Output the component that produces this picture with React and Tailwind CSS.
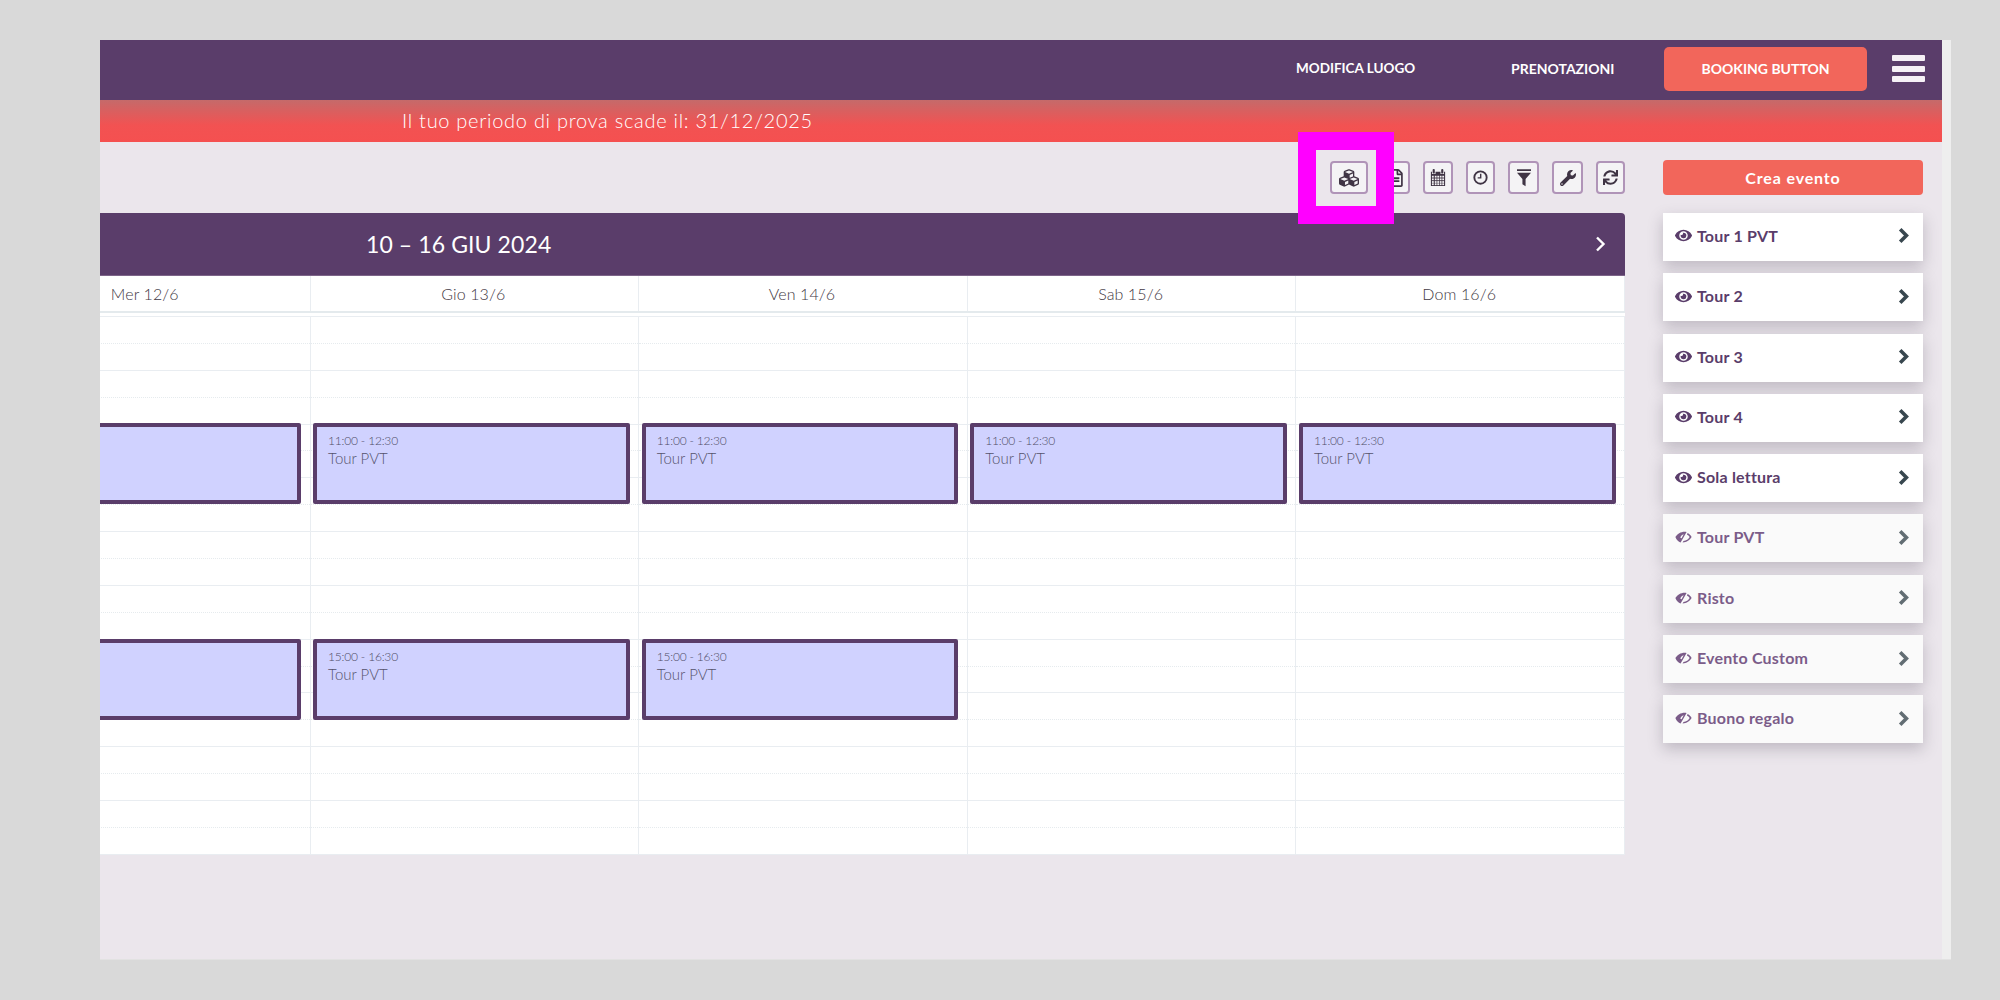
import React from "react";
import { FaCubes, FaRegFileAlt, FaWrench, FaSync, FaEye } from "react-icons/fa";

const CalIcon = () => (
  <svg width="16" height="18" viewBox="0 0 18 20" fill="#3f3444">
    <rect x="3" y="0" width="2.4" height="5" rx="1" />
    <rect x="12.6" y="0" width="2.4" height="5" rx="1" />
    <path d="M1 3h1.2v2.5h4V3h5.6v2.5h4V3H17v16H1z" />
    <g fill="#f4f3f5">
      {[7.5, 10.5, 13.5, 16].map((y) =>
        [2.2, 5.4, 8.2, 11, 13.8].map((x) => <rect key={x + "-" + y} x={x} y={y} width="2" height="2" />)
      )}
    </g>
  </svg>
);

const ClockIcon = () => (
  <svg width="15" height="15" viewBox="0 0 16 16" fill="none" stroke="#3f3444">
    <circle cx="8" cy="8" r="6.6" strokeWidth="2" />
    <path d="M8.2 4v4.4H5" strokeWidth="1.5" />
  </svg>
);

const FunnelIcon = () => (
  <svg width="14" height="18" viewBox="0 0 16 20" fill="#3f3444">
    <rect x="0" y="0" width="16" height="2" />
    <path d="M0 4h16L9.8 11v8.5L6.2 17v-6z" />
  </svg>
);

const EyeOff = ({ color }) => (
  <svg width="17" height="12" viewBox="0 0 17 12">
    <path fill={color} d="M11.6 0.9 5.6 11.4C3.4 10.7 1.4 8.7 0.4 6 2.4 2.4 7 0 11.6 0.9z" />
    <path fill="#fafafa" d="M8.7 3.2 6.6 7.2 5.3 6.8C5.7 5 7 3.6 8.7 3.2z" />
    <path fill={color} d="M12.6 2.1C14.4 3 15.8 4.3 16.6 6 15 9 11.6 11.4 7.6 11.4l.9-1.5c2.8-.2 5-1.7 6.2-3.9-.7-1-1.6-1.8-2.8-2.4z" />
  </svg>
);

const Chevron = ({ color }) => (
  <svg width="11" height="15" viewBox="0 0 11 15" fill="none" stroke={color} strokeWidth="3.6">
    <path d="M2.2 1.3 8.4 7.5 2.2 13.7" />
  </svg>
);

const tools = [
  { w: "w-[38px]", icon: <FaCubes size={20} color="#3f3444" /> },
  { w: "w-[29px]", icon: <FaRegFileAlt size={18} color="#3f3444" /> },
  { w: "w-[30px]", icon: <CalIcon /> },
  { w: "w-[29px]", icon: <ClockIcon /> },
  { w: "w-[31px]", icon: <FunnelIcon /> },
  { w: "w-[31px]", icon: <FaWrench size={16} color="#3f3444" /> },
  { w: "w-[29px]", icon: <FaSync size={15} color="#3f3444" /> },
];

const items = [
  ["Tour 1 PVT", true],
  ["Tour 2", true],
  ["Tour 3", true],
  ["Tour 4", true],
  ["Sola lettura", true],
  ["Tour PVT", false],
  ["Risto", false],
  ["Evento Custom", false],
  ["Buono regalo", false],
];

const days = [
  { label: "Mer 12/6", ev: [106, 322], clipped: true },
  { label: "Gio 13/6", ev: [106, 322] },
  { label: "Ven 14/6", ev: [106, 322] },
  { label: "Sab 15/6", ev: [106] },
  { label: "Dom 16/6", ev: [106] },
];

const times = { 106: "11:00 - 12:30", 322: "15:00 - 16:30" };
const slots = Array.from({ length: 20 }, (_, i) => i);

function EventCard({ top, clipped }) {
  return (
    <div
      className="absolute left-[2.5px] right-[8.5px] h-[81px] rounded-[2px] border-4 border-[#5a3d6a] bg-[#d0d2ff] pl-[11px] pt-[6px]"
      style={{ top }}
    >
      {!clipped && (
        <>
          <div className="text-[12px] font-light leading-[16px] tracking-[-0.2px] text-[#4f4d66]">{times[top]}</div>
          <div className="text-[15px] font-light leading-[19px] text-[#55536c]">Tour PVT</div>
        </>
      )}
    </div>
  );
}

export default function App() {
  return (
    <div className="h-[1000px] w-[2000px] overflow-hidden bg-[#d9d9d9] pl-[100px] pt-[40px] font-['Lato',sans-serif]">
      <div className="h-[920px] w-[1851px] border-b border-[#e2e2e2] bg-[#eeeeee] pr-[9px]">
        <div className="flex h-full flex-col bg-[#ebe6ec]">
          <header className="flex h-[60px] items-center bg-[#5a3d6a] text-white">
            <span className="ml-[1196px] w-[215px] pb-[3px] text-[13.5px] font-bold">MODIFICA LUOGO</span>
            <span className="w-[153px] pb-[3px] text-[14px] font-bold">PRENOTAZIONI</span>
            <button className="mb-[2px] h-[44px] w-[203px] rounded-[5px] bg-[#f2665b] pb-[1px] text-[14px] font-bold">BOOKING BUTTON</button>
            <div className="mb-[3px] ml-[25px] flex w-[33px] flex-col gap-[4.5px]">
              <div className="h-[6px] rounded-[1px] bg-[#f6f1f6]" />
              <div className="h-[6px] rounded-[1px] bg-[#f6f1f6]" />
              <div className="h-[6px] rounded-[1px] bg-[#f6f1f6]" />
            </div>
          </header>

          <div className="flex h-[42px] items-center bg-[linear-gradient(to_bottom,#c56a6a,#f25252_60%,#f55050)] pb-[2px] pl-[302px] text-[20px] font-light tracking-[0.72px] text-white">
            Il tuo periodo di prova scade il: 31/12/2025
          </div>

          <div className="flex flex-1">
            <main className="w-[1525px]">
              <div className="relative flex h-[71px] justify-end gap-[13px] pt-[19px]">
                {tools.map((t, i) => (
                  <div
                    key={i}
                    className={`flex h-[33px] items-center justify-center rounded-[4px] border-2 border-[#b094b8] bg-[#f4f3f5] ${t.w}`}
                  >
                    {t.icon}
                  </div>
                ))}
                <div className="absolute left-[1198px] top-[-10px] h-[92px] w-[96px] border-[18px] border-[#ff00ff]" />
              </div>

              <div className="flex h-[63px] items-center justify-between rounded-tr-[4px] border-b border-[#7d6489] bg-[#5a3d6a] pl-[266px] pr-[19px] text-white">
                <span className="text-[23px] tracking-[0.1px]">10 – 16 GIU 2024</span>
                <svg width="11" height="16" viewBox="0 0 11 16" fill="none" stroke="#ffffff" strokeWidth="2.4">
                  <path d="M2 1.5 8.5 8 2 14.5" />
                </svg>
              </div>

              <div className="h-[579px] overflow-hidden">
                <div className="-ml-[118px] grid w-[1643px] grid-cols-5">
                  {days.map((d) => (
                    <div key={d.label} className="flex h-[35px] items-center justify-center border-r border-[#e9edf1] bg-white pr-[2px] text-[16px] font-light tracking-[0.1px] text-[#3f3844]">
                      {d.label}
                    </div>
                  ))}
                </div>
                <div className="h-[2px] bg-[#e4eaed]" />
                <div className="h-[4px] border-b border-[#e9edf1] bg-white" />
                <div className="-ml-[118px] grid w-[1643px] grid-cols-5">
                  {days.map((d) => (
                    <div key={d.label} className="relative border-r border-[#e9edf1] bg-white">
                      {slots.map((i) => (
                        <div
                          key={i}
                          className={`h-[26.9px] border-b ${i % 2 === 0 ? "border-dotted border-[#e6ebee]" : "border-[#e9edf1]"}`}
                        />
                      ))}
                      {d.ev.map((top) => (
                        <EventCard key={top} top={top} clipped={d.clipped} />
                      ))}
                    </div>
                  ))}
                </div>
              </div>
            </main>

            <aside className="ml-[38px] flex w-[260px] flex-col gap-[12.3px] pt-[18px]">
              <button className="mb-[5.7px] h-[35px] rounded-[4px] bg-[#f2665b] text-[16px] font-bold tracking-[0.85px] text-white">Crea evento</button>
              {items.map(([name, on]) => (
                <div
                  key={name}
                  className={`flex h-[48px] items-center justify-between pl-[12px] pr-[14px] shadow-[0_6px_14px_rgba(60,50,70,0.25)] ${on ? "bg-white text-[#5a3d6a]" : "bg-[#fafafa] text-[#7b5c89]"}`}
                >
                  <span className="flex items-center gap-[5px] pb-[2px] text-[16px] font-bold tracking-[0.2px]">
                    {on ? <FaEye size={17} /> : <EyeOff color="#7b5c89" />}
                    {name}
                  </span>
                  <span className="pb-[2px]">
                    <Chevron color={on ? "#38474f" : "#626d73"} />
                  </span>
                </div>
              ))}
            </aside>
          </div>
        </div>
      </div>
    </div>
  );
}
